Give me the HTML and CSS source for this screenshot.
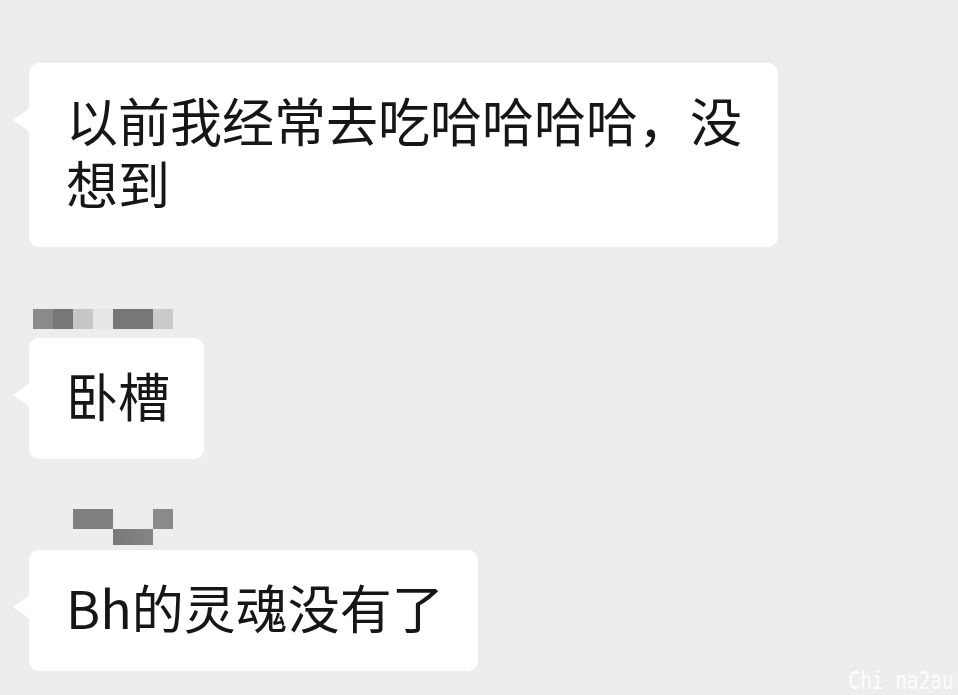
FILE: index.html
```html
<!DOCTYPE html>
<html lang="zh-CN">
<head>
    <meta charset="UTF-8">
    <meta name="viewport" content="width=device-width, initial-scale=1.0">
    <title>聊天记录</title>
    <link rel="stylesheet" href="styles.css">
</head>
<body>

    <div class="chat">
        <div class="msg msg-first">
            <div class="bubble bubble-wide">以前我经常去吃哈哈哈哈，没想到</div>
        </div>

        <div class="msg msg-second">
            <div class="name name-a">
                <span class="px w1 c1"></span>
                <span class="px w1 c2"></span>
                <span class="px w1 c3"></span>
                <span class="px w1 c4"></span>
                <span class="px w2 c2"></span>
                <span class="px w1 c5"></span>
            </div>
            <div class="bubble">卧槽</div>
        </div>

        <div class="msg msg-third">
            <div class="name name-b">
                <span class="px w2 c6 r1"></span>
                <span class="px w1 c1 r1 k3"></span>
                <span class="px w2 c7 r2 k2"></span>
            </div>
            <div class="bubble">Bh的灵魂没有了</div>
        </div>
    </div>

    <div class="watermark">Chi na2au</div>

</body>
</html>
```

FILE: styles.css
```css
body {
    margin: 0;
    background-color: #ededed;
    font-family: "Noto Sans CJK SC", "Noto Sans", sans-serif;
    color: #161616;
    min-height: 695px;
    overflow: hidden;
}

.chat {
    padding: 63px 0 0 29px;
    display: flex;
    flex-direction: column;
    align-items: flex-start;
}

.msg {
    display: flex;
    flex-direction: column;
    align-items: flex-start;
}

.msg-second {
    margin-top: 62px;
}

.msg-third {
    margin-top: 50px;
}

.bubble {
    position: relative;
    background-color: #fff;
    border-radius: 10px;
    padding: 25px 34px 33px 37px;
    font-size: 52px;
    line-height: 63px;
    box-sizing: border-box;
    max-width: 749px;
}

.bubble::before {
    content: "";
    position: absolute;
    left: -16px;
    top: 45px;
    border-right: 17px solid #fff;
    border-top: 12px solid transparent;
    border-bottom: 12px solid transparent;
}

/* blurred sender names */
.name {
    display: grid;
    grid-auto-rows: 20px;
}

.name-a {
    margin-left: 4px;
    margin-bottom: 9px;
    grid-template-columns: repeat(7, 20px);
}

.name-b {
    margin-left: 44px;
    margin-bottom: 5px;
    grid-template-columns: repeat(5, 20px);
    grid-template-rows: 20px 16px;
}

.px { display: block; }
.w1 { grid-column: span 1; }
.w2 { grid-column: span 2; }
.r1 { grid-row: 1; }
.r2 { grid-row: 2; }
.k2 { grid-column: 3 / span 2; }
.k3 { grid-column: 5; }

.c1 { background-color: #8a8a8a; }
.c2 { background-color: #777; }
.c3 { background-color: #c6c6c6; }
.c4 { background-color: #e6e6e6; }
.c5 { background-color: #cacaca; }
.c6 { background-color: #808080; }
.c7 { background: linear-gradient(90deg, #797979, #858585); }

.watermark {
    position: absolute;
    right: 5px;
    bottom: 2px;
    font-family: "DejaVu Sans Mono", monospace;
    font-size: 25px;
    line-height: 25px;
    color: rgba(255, 255, 255, 0.92);
    transform: scaleX(0.775);
    transform-origin: right bottom;
    white-space: pre;
}
```
